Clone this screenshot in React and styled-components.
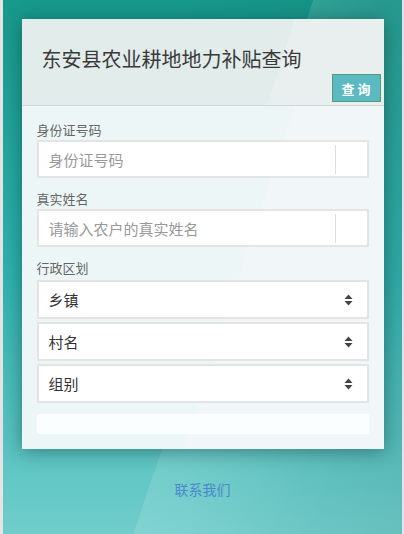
import React from 'react';
import styled, { createGlobalStyle } from 'styled-components';

const GlobalStyle = createGlobalStyle`
  html, body {
    margin: 0;
    padding: 0;
    background: #e4e4e4;
  }
  body {
    font-family: "Noto Sans CJK SC", "Liberation Sans", sans-serif;
  }
`;

const Page = styled.div`
  margin: 0 2px 0 3px;
  min-height: 534px;
  padding-top: 19px;
  box-sizing: border-box;
  display: flex;
  flex-direction: column;
  align-items: center;
  background:
    linear-gradient(108.6deg, rgba(255, 255, 255, 0) 53.6%, rgba(255, 255, 255, 0.12) 53.6%, rgba(255, 255, 255, 0.02) 85%),
    linear-gradient(to right, rgba(0, 70, 70, 0) 45%, rgba(0, 70, 70, 0.1)),
    linear-gradient(to bottom, #17998b 0%, #2db1ae 50%, #70cdcb 100%);
`;

const Card = styled.div`
  width: 362px;
  box-shadow: 0 2px 18px rgba(0, 40, 40, 0.45);
  background: linear-gradient(108deg, #edf6f7 60%, #f1f7f8 60%);
`;

const Header = styled.div`
  padding: 26px 3px 3px 20px;
  background: linear-gradient(108deg, #e2eceb 70%, #e8efee 70%);
  border-bottom: 1px solid #cdd7d6;
  display: flex;
  flex-direction: column;
`;

const Title = styled.h1`
  margin: 0;
  font-size: 20px;
  line-height: 28px;
  font-weight: 400;
  color: #3a3a3a;
`;

const ButtonRow = styled.div`
  margin-top: 1px;
  display: flex;
  justify-content: flex-end;
`;

const QueryButton = styled.button`
  width: 49px;
  height: 28px;
  padding: 0 0 0 3px;
  border: 1px solid #4f9e74;
  background: #5bb9c1;
  color: #fff;
  font-family: inherit;
  font-size: 13px;
  font-weight: 700;
  letter-spacing: 3px;
  cursor: pointer;
`;

const Body = styled.div`
  padding: 15px 15px 15px;
  display: flex;
  flex-direction: column;
`;

const Group = styled.div`
  display: flex;
  flex-direction: column;
  margin-bottom: ${p => p.$gap ?? 12}px;
`;

const Label = styled.label`
  font-size: 13px;
  line-height: 18px;
  color: #666;
  margin-bottom: ${p => p.$gap ?? 1}px;
`;

const InputBox = styled.div`
  height: 38px;
  box-sizing: border-box;
  border: 2px solid #e3e4e4;
  background: #fff;
  display: flex;
  align-items: center;
`;

const Field = styled.input`
  flex: 1;
  min-width: 0;
  height: 100%;
  border: none;
  outline: none;
  padding: 0 0 0 10px;
  background: transparent;
  font-family: inherit;
  font-size: 15px;
  color: #333;

  &::placeholder {
    color: #999;
  }
`;

const Addon = styled.span`
  width: 31px;
  height: 29px;
  border-left: 1px solid #ddd;
`;

const SelectList = styled.div`
  display: flex;
  flex-direction: column;
  gap: 3px;
`;

const SelectBox = styled.div`
  height: 39px;
  box-sizing: border-box;
  border: 2px solid #e3e4e4;
  background: #fff;
  display: flex;
  align-items: center;
  padding: 0 14px 0 10px;
  font-size: 15px;
  color: #333;
`;

const SelectText = styled.span`
  flex: 1;
`;

const Spacer = styled.div`
  margin-top: 11px;
  height: 20px;
  background: #fbfefe;
`;

const Contact = styled.a`
  margin-top: 30px;
  font-size: 14px;
  line-height: 20px;
  color: #4a88c9;
  text-decoration: none;
`;

const Arrows = () => (
  <svg width="9" height="12" viewBox="0 0 9 12">
    <path d="M4.5 0.5 L8.5 5 L0.5 5 Z" fill="#444" />
    <path d="M0.5 7 L8.5 7 L4.5 11.5 Z" fill="#444" />
  </svg>
);

const selects = ['乡镇', '村名', '组别'];

export default function App() {
  return (
    <>
      <GlobalStyle />
      <Page>
        <Card>
          <Header>
            <Title>东安县农业耕地地力补贴查询</Title>
            <ButtonRow>
              <QueryButton>查询</QueryButton>
            </ButtonRow>
          </Header>
          <Body>
            <Group>
              <Label>身份证号码</Label>
              <InputBox>
                <Field placeholder="身份证号码" />
                <Addon />
              </InputBox>
            </Group>
            <Group>
              <Label>真实姓名</Label>
              <InputBox>
                <Field placeholder="请输入农户的真实姓名" />
                <Addon />
              </InputBox>
            </Group>
            <Group $gap={0}>
              <Label $gap={3}>行政区划</Label>
              <SelectList>
                {selects.map(s => (
                  <SelectBox key={s}>
                    <SelectText>{s}</SelectText>
                    <Arrows />
                  </SelectBox>
                ))}
              </SelectList>
            </Group>
            <Spacer />
          </Body>
        </Card>
        <Contact href="#">联系我们</Contact>
      </Page>
    </>
  );
}
